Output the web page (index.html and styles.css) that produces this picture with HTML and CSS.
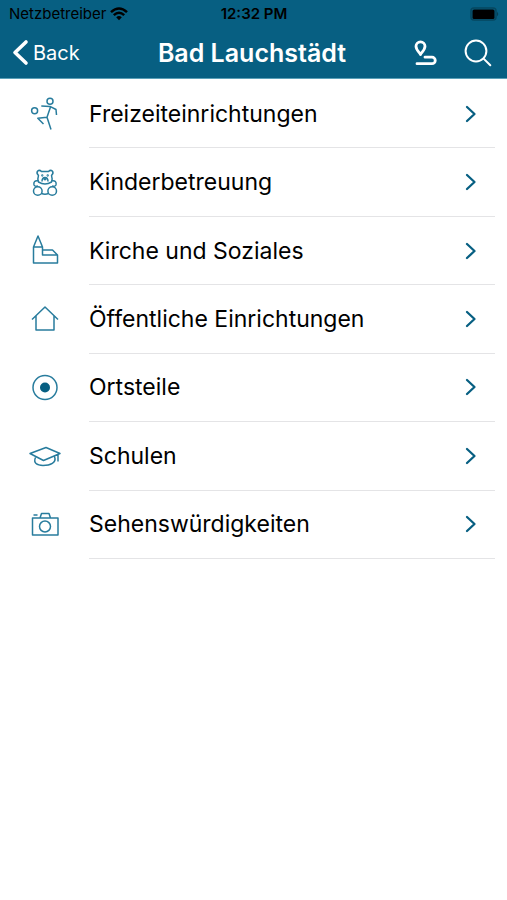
FILE: index.html
```html
<!DOCTYPE html>
<html lang="de">
<head>
<meta charset="utf-8">
<meta name="viewport" content="width=device-width, initial-scale=1">
<title>Bad Lauchstädt</title>
<link rel="stylesheet" href="styles.css">
</head>
<body>
<header class="header">
  <div class="status">
    <div class="carrier">
      <span>Netzbetreiber</span>
      <svg width="18" height="14" viewBox="0 0 18 14" fill="none" stroke="#000" stroke-width="2.5" aria-hidden="true"><path d="M1 5.2Q9-2.2 17 5.2M3.8 8.2Q9 3.4 14.2 8.2"/><path d="M6.2 10.3Q9 7.8 11.8 10.3L9 13.3Z" fill="#000" stroke="none"/></svg>
    </div>
    <time class="clock">12:32 PM</time>
    <svg class="battery" width="29" height="14" viewBox="0 0 29 14" aria-hidden="true"><rect x="1" y="1" width="25" height="12" rx="3" fill="none" stroke="#06475f" stroke-width="1.5"/><rect x="2.500" y="2.500" width="22" height="9.500" rx="1.500"/><path d="M27.200 4.700q2 2.300 0 4.600Z" fill="#06384c"/></svg>
  </div>
  <nav class="nav">
    <a class="back" href="#"><svg width="17" height="27" viewBox="0 0 17 27" fill="none" stroke="#fff" stroke-width="3.600" stroke-linecap="round" stroke-linejoin="round" aria-hidden="true"><path d="M14 3L3 13.500L14 24"/></svg><span>Back</span></a>
    <h1 class="title">Bad Lauchstädt</h1>
    <div class="actions">
      <button class="action" type="button" aria-label="Route"><svg width="24" height="28" viewBox="0 0 24 28" fill="none" stroke="#fff" stroke-width="2.800" stroke-linecap="round" stroke-linejoin="round" aria-hidden="true"><path d="M7.500 15.500C6.500 13.500 3 11 3 7.300A4.500 4.500 0 0 1 12 7.300C12 11 8.500 13.500 7.500 15.500Z"/><path d="M12 18.200H19A3.200 3.200 0 0 1 19 24.700H4"/></svg></button>
      <button class="action" type="button" aria-label="Suche"><svg width="28" height="28" viewBox="0 0 28 28" fill="none" stroke="#fff" stroke-width="2" stroke-linecap="round" aria-hidden="true"><circle cx="12" cy="12" r="10.400"/><path d="M19.600 19.600L26.300 26.300"/></svg></button>
    </div>
  </nav>
</header>
<main>
  <ul class="list">
    <li><a class="row" href="#"><svg class="icon" viewBox="0 0 34 34" aria-hidden="true"><circle cx="6.600" cy="13.800" r="3"/><circle cx="22" cy="4.200" r="3"/><path d="M13.300 9L22 9.400L28 12.500L28.500 18M22.500 10L19 20.300L23 32.500M19 20.300L9.800 21.300L15.500 27"/></svg><span class="label">Freizeiteinrichtungen<svg class="chevron" viewBox="0 0 12 18" aria-hidden="true"><path d="M2 2L9.500 9L2 16"/></svg></span></a></li>
    <li><a class="row" href="#"><svg class="icon" viewBox="0 0 34 34" aria-hidden="true"><path d="M10.500 16Q9.300 12.500 10.500 9.500Q8 7 9.700 5Q11.500 3.500 13.500 5.500H20.500Q22.500 3.500 24.300 5Q26 7 23.500 9.500Q24.700 12.500 23.500 16Q17 20 10.500 16ZM10.500 15Q5 14 6 19Q7 21 10 20M23.500 15Q29 14 28 19Q27 21 24 20M13.500 27.500Q17 29 20.500 27.500"/><circle cx="9.800" cy="25" r="4.300"/><circle cx="24.200" cy="25" r="4.300"/><path d="M14 15.500Q14 11.500 17 11.500T20 15.500"/><circle cx="14.300" cy="9.500" r=".4"/><circle cx="19.700" cy="9.500" r=".4"/><circle cx="17" cy="12.800" r="1"/></svg><span class="label">Kinderbetreuung<svg class="chevron" viewBox="0 0 12 18" aria-hidden="true"><path d="M2 2L9.500 9L2 16"/></svg></span></a></li>
    <li><a class="row" href="#"><svg class="icon" viewBox="0 0 34 34" aria-hidden="true"><path d="M5.500 13L10 2L14.500 13ZM5.500 13V29H29.500V21L24.500 16H14.500V13M14.500 16V21H29.500"/></svg><span class="label">Kirche und Soziales<svg class="chevron" viewBox="0 0 12 18" aria-hidden="true"><path d="M2 2L9.500 9L2 16"/></svg></span></a></li>
    <li><a class="row" href="#"><svg class="icon" viewBox="0 0 34 34" aria-hidden="true"><path d="M4 17.500L17 5L30 17.500M8 14V28H26V14"/></svg><span class="label">Öffentliche Einrichtungen<svg class="chevron" viewBox="0 0 12 18" aria-hidden="true"><path d="M2 2L9.500 9L2 16"/></svg></span></a></li>
    <li><a class="row" href="#"><svg class="icon" viewBox="0 0 34 34" aria-hidden="true"><circle cx="17" cy="16.500" r="12"/><circle class="dot" cx="17" cy="16.500" r="5"/></svg><span class="label">Ortsteile<svg class="chevron" viewBox="0 0 12 18" aria-hidden="true"><path d="M2 2L9.500 9L2 16"/></svg></span></a></li>
    <li><a class="row" href="#"><svg class="icon" viewBox="0 0 34 34" aria-hidden="true"><path d="M2 14.500L18 8.500L32 14.500L15.500 21.500ZM7.500 18.500C5 24 9 26.500 15 26.500C22 26.500 29 24 26.500 17.500M30 15.500V22.500"/></svg><span class="label">Schulen<svg class="chevron" viewBox="0 0 12 18" aria-hidden="true"><path d="M2 2L9.500 9L2 16"/></svg></span></a></li>
    <li><a class="row" href="#"><svg class="icon" viewBox="0 0 34 34" aria-hidden="true"><path d="M4.500 10H30V27H4.500ZM12 10L13.500 5.500H21L22.500 10M5.500 7H9.500"/><circle cx="17" cy="18.500" r="5.500"/></svg><span class="label">Sehenswürdigkeiten<svg class="chevron" viewBox="0 0 12 18" aria-hidden="true"><path d="M2 2L9.500 9L2 16"/></svg></span></a></li>
  </ul>
</main>
</body>
</html>
```
FILE: styles.css
```css
* {
  box-sizing: border-box;
}

body {
  margin: 0;
  background: #fff;
  color: #000;
  font-family: Inter, "Liberation Sans", sans-serif;
}

svg {
  display: block;
  flex: none;
}

a {
  color: inherit;
  text-decoration: none;
}

.header {
  background: #075f82;
  border-bottom: 1px solid #5aa0b8;
}

.status {
  display: grid;
  grid-template-columns: 1fr auto 1fr;
  align-items: center;
  height: 27px;
  padding: 0 8px 0 9px;
  font-size: 15px;
}

.carrier {
  display: flex;
  align-items: center;
  gap: 4px;
}

.clock {
  font-weight: 600;
}

.battery {
  justify-self: end;
}

.nav {
  display: grid;
  grid-template-columns: 1fr auto 1fr;
  align-items: center;
  height: 51px;
  padding: 0 15px 0 12px;
  color: #fff;
}

.back {
  display: flex;
  align-items: center;
  gap: 4px;
  font-size: 20px;
}

.title {
  margin: 0;
  font-size: 25px;
  font-weight: 600;
  line-height: 32px;
}

.actions {
  display: flex;
  justify-content: flex-end;
  gap: 27px;
}

.action {
  padding: 0;
  border: 0;
  background: none;
}

.list {
  display: grid;
  grid-auto-rows: 1fr;
  min-height: 480px;
  margin: 0;
  padding: 1px 12px 0 28px;
  list-style: none;
}

.row {
  display: flex;
  align-items: stretch;
  gap: 27px;
  height: 100%;
}

.icon {
  align-self: center;
  width: 34px;
  height: 34px;
  fill: none;
  stroke: #287c9d;
  stroke-width: 1.5;
  stroke-linejoin: round;
}

.dot {
  fill: #075f82;
  stroke: none;
}

.label {
  display: flex;
  flex: 1;
  align-items: center;
  justify-content: space-between;
  padding-right: 18px;
  border-bottom: 1px solid #e4e4e6;
  font-size: 23px;
}

.chevron {
  width: 12px;
  height: 18px;
  fill: none;
  stroke: #075f82;
  stroke-width: 2.3;
  stroke-linecap: round;
  stroke-linejoin: round;
}
```
